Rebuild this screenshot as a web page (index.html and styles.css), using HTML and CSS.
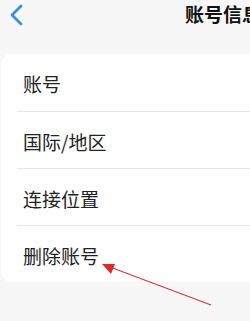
FILE: index.html
```html
<!DOCTYPE html>
<html lang="zh-CN">
<head>
  <meta charset="UTF-8" />
  <title>账号信息</title>
  <link rel="stylesheet" href="styles.css">
</head>
<body>
  <div class="page">
    <div class="top-bar">
      <svg class="back-icon" width="14" height="22" viewBox="0 0 14 22">
        <path d="M12 2 L3 11 L12 20" fill="none" stroke="#3b8fe0" stroke-width="2.8" stroke-linecap="round" stroke-linejoin="round" />
      </svg>
      <div class="title">账号信息</div>
    </div>

    <div class="card">
      <div class="row">账号</div>
      <div class="row">国际/地区</div>
      <div class="row">连接位置</div>
      <div class="row">删除账号</div>
    </div>

    <svg class="pointer" width="250" height="321" viewBox="0 0 250 321">
      <line x1="211" y1="305" x2="110" y2="267" stroke="#d9383a" stroke-width="1.2" />
      <polygon points="102,264 115,264 111,274" fill="#e02a2a" />
    </svg>
  </div>
</body>
</html>
```

FILE: styles.css
```css
html,
body {
  margin: 0;
  padding: 0;
}

body {
  background-color: #f7f7f7;
  font-family: "Noto Sans CJK SC", "Noto Sans", sans-serif;
  color: #222;
  overflow: hidden;
}

.page {
  position: relative;
  width: 250px;
  height: 321px;
  overflow: hidden;
}

.top-bar {
  display: flex;
  align-items: flex-start;
  height: 54px;
  padding-left: 9px;
  box-sizing: border-box;
}

.back-icon {
  margin-top: 4px;
  flex-shrink: 0;
}

.title {
  margin-left: 162px;
  padding-top: 4px;
  font-size: 19px;
  line-height: 19px;
  font-weight: 700;
  color: #111;
  white-space: nowrap;
}

.card {
  margin-left: 1px;
  margin-right: -20px;
  background-color: #fff;
  border-radius: 10px;
}

.row {
  height: 57px;
  padding-left: 22px;
  padding-top: 2px;
  box-sizing: border-box;
  display: flex;
  align-items: center;
  font-size: 19px;
  position: relative;
}

.row + .row {
  border-top: 1px solid #e8e8e8;
  margin-left: 16px;
  padding-left: 6px;
}

.pointer {
  position: absolute;
  top: 0;
  left: 0;
  pointer-events: none;
}
```
